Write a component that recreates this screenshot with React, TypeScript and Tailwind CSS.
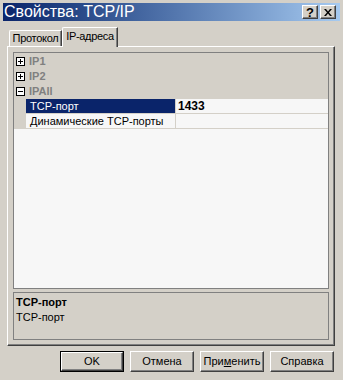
import { FunctionComponent, ReactNode } from "react";

const font = "font-['Liberation_Sans',Arial,sans-serif]";

const TitleButton: FunctionComponent<{ children: ReactNode }> = ({ children }) => (
    <div className="w-[16px] h-[14px] bg-[#D4D0C8] border-t border-l border-white border-r border-b border-r-[#404040] border-b-[#404040] shadow-[inset_-1px_-1px_0_#808080] flex items-center justify-center">
        {children}
    </div>
);

const Expander: FunctionComponent<{ open?: boolean }> = ({ open }) => (
    <svg width="9" height="9" viewBox="0 0 9 9" className="shrink-0">
        <rect x="0.5" y="0.5" width="8" height="8" fill="#ffffff" stroke="#000000" />
        <line x1="2" y1="4.5" x2="7" y2="4.5" stroke="#000000" />
        {!open && <line x1="4.5" y1="2" x2="4.5" y2="7" stroke="#000000" />}
    </svg>
);

const Category: FunctionComponent<{ label: string; open?: boolean }> = ({ label, open }) => (
    <div className="h-[15px] flex items-center bg-[#D4D0C8] pl-[2px]">
        <Expander open={open} />
        <span className="ml-[4px] text-[11px] font-bold text-[#808080] leading-none">{label}</span>
    </div>
);

const PropRow: FunctionComponent<{ name: string; value?: string; selected?: boolean }> = ({ name, value, selected }) => (
    <div className="h-[15px] flex bg-[#D4D0C8]">
        <div className="w-[12px]" />
        <div
            className={
                selected
                    ? "w-[150px] h-[14px] bg-[#0A246A] text-white text-[11px] leading-[14px] pl-[4px] border-r border-[#D4D0C8]"
                    : "w-[150px] h-[14px] bg-[#F7F7F7] text-black text-[11px] leading-[14px] pl-[4px] border-r border-[#D4D0C8]"
            }
        >
            {name}
        </div>
        <div className="flex-1 h-[14px] bg-[#F7F7F7] text-black text-[12px] font-bold leading-[14px] pl-[2px]">
            {value}
        </div>
    </div>
);

const Button: FunctionComponent<{ children: ReactNode; primary?: boolean }> = ({ children, primary }) => (
    <div
        className={
            primary
                ? "w-[64px] h-[21px] border border-black flex"
                : "w-[64px] h-[21px] flex"
        }
    >
        <div className="flex-1 flex items-center justify-center bg-[#D4D0C8] border-t border-l border-white border-r border-b border-r-[#404040] border-b-[#404040] shadow-[inset_-1px_-1px_0_#808080] text-[11px] text-black">
            {children}
        </div>
    </div>
);

export default function App() {
    return (
        <div className={`${font} w-[343px] h-[380px] bg-[#D4D0C8] border-t-[3px] border-l-[3px] border-r-[3px] border-[#D4D0C8] flex flex-col overflow-hidden`}>
            {/* title bar */}
            <div className="h-[18px] bg-gradient-to-r from-[#0A246A] to-[#A6CAF0] flex items-center pl-[1px] pr-[4px]">
                <span className="text-white text-[16px] leading-none flex-1">Свойства: TCP/IP</span>
                <div className="flex gap-[2px]">
                    <TitleButton>
                        <span className="text-[13px] font-bold leading-none text-black">?</span>
                    </TitleButton>
                    <TitleButton>
                        <svg width="8" height="7" viewBox="0 0 8 7">
                            <path d="M0 0h2l2 2.5L6 0h2L5 3.5 8 7H6L4 4.5 2 7H0l3-3.5z" fill="#000" />
                        </svg>
                    </TitleButton>
                </div>
            </div>

            {/* tabs */}
            <div className="mt-[6px] pl-[6px] flex items-end h-[19px]">
                <div className="w-[53px] h-[16px] flex justify-center border-t border-l border-white border-r border-r-[#404040] shadow-[inset_-1px_0_0_#808080] text-[11px] leading-[15px] tracking-[-0.3px] rounded-tl-[2px]">
                    Протокол
                </div>
                <div className="relative z-10 w-[56px] h-[20px] -mb-[1px] flex justify-center bg-[#D4D0C8] border-t border-l border-white border-r border-r-[#404040] shadow-[inset_-1px_0_0_#808080] text-[11px] leading-[17px] tracking-[-0.3px] rounded-tl-[2px]">
                    IP-адреса
                </div>
            </div>

            {/* tab panel */}
            <div className="ml-[4px] mr-[5px] h-[300px] border-t border-l border-white border-r border-b border-r-[#404040] border-b-[#404040] shadow-[inset_-1px_-1px_0_#808080] flex flex-col pl-[5px] pr-[5px] pt-[5px] gap-[3px]">
                <div className="h-[237px] border border-[#808080] bg-[#F7F7F7] flex flex-col">
                    <div className="h-[1px] bg-[#D4D0C8]" />
                    <Category label="IP1" />
                    <Category label="IP2" />
                    <Category label="IPAll" open />
                    <PropRow name="TCP-порт" value="1433" selected />
                    <PropRow name="Динамические TCP-порты" />
                </div>
                <div className="h-[48px] border border-[#808080] px-[2px] pt-[2px] text-[11px] text-black">
                    <div className="font-bold leading-[14px]">TCP-порт</div>
                    <div className="leading-[16px]">TCP-порт</div>
                </div>
            </div>

            {/* buttons */}
            <div className="mt-[5px] flex justify-end gap-[6px] pr-[6px]">
                <Button primary>OK</Button>
                <Button>Отмена</Button>
                <Button>
                    <span>
                        При<span className="underline">м</span>енить
                    </span>
                </Button>
                <Button>Справка</Button>
            </div>
        </div>
    );
}
